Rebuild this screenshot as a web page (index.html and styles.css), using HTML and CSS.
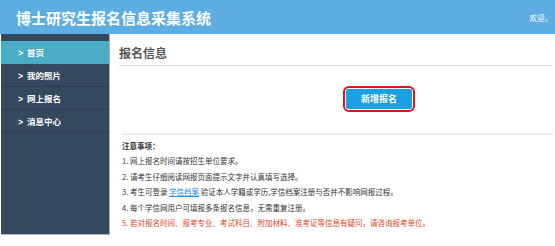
FILE: index.html
```html
<!DOCTYPE html>
<html>
<head>
	<meta charset="utf-8">
	<title>博士研究生报名信息采集系统</title>
	<link rel="stylesheet" href="styles.css">
</head>
<body>
	<div class="header">
		<h1 class="logo">博士研究生报名信息采集系统</h1>
		<span class="welcome">欢迎，</span>
	</div>

	<div class="main">
		<ul class="menu">
			<li class="active"><span class="arrow">&gt;</span>首页</li>
			<li><span class="arrow">&gt;</span>我的照片</li>
			<li><span class="arrow">&gt;</span>网上报名</li>
			<li><span class="arrow">&gt;</span>消息中心</li>
		</ul>

		<div class="content">
			<h2 class="title">报名信息</h2>

			<div class="btn-wrap">
				<span class="btn-ring"><a class="btn" href="#">新增报名</a></span>
			</div>

			<div class="notes">
				<p class="notes-head">注意事项：</p>
				<p>1. 网上报名时间请按招生单位要求。</p>
				<p>2. 请考生仔细阅读网报页面提示文字并认真填写选择。</p>
				<p>3. 考生可登录 <a class="link" href="#">学信档案</a> 验证本人学籍或学历,学信档案注册与否并不影响网报过程。</p>
				<p>4. 每个学信网用户可填报多条报名信息，无需重复注册。</p>
				<p class="warn">5. 若对报名时间、报考专业、考试科目、附加材料、准考证等信息有疑问，请咨询报考单位。</p>
			</div>
		</div>
	</div>
</body>
</html>
```

FILE: styles.css
```css
*{
	padding: 0;
	margin: 0;
}
body{
	font-family: "Liberation Sans", "Noto Sans CJK SC", sans-serif;
	background: #fff;
}
.header{
	height: 34px;
	background: #5dade2;
	display: flex;
	align-items: center;
	justify-content: space-between;
	padding: 0 3px 0 16px;
}
.logo{
	font-family: "Noto Sans CJK SC", sans-serif;
	font-size: 15px;
	font-weight: bold;
	color: #fff;
}
.welcome{
	font-size: 7.5px;
	color: #fff;
	font-family: "Noto Sans CJK SC", sans-serif;
}
.main{
	display: flex;
}
.menu{
	list-style: none;
	width: 108px;
	height: 193px;
	padding-top: 7px;
	margin-left: 1px;
	background: #34495e;
	border-right: 1px solid #a9b4bf;
	border-bottom: 1px solid #a9b4bf;
}
.menu li{
	height: 22px;
	line-height: 22px;
	border-bottom: 1px solid #2b3d4f;
	color: #fff;
	font-size: 8.5px;
	font-weight: bold;
	font-family: "Noto Sans CJK SC", sans-serif;
	padding-left: 17px;
}
.menu li.active{
	background: #4bacc6;
	border-bottom-color: #4bacc6;
}
.arrow{
	margin-right: 4px;
	font-family: "Liberation Sans", sans-serif;
}
.content{
	flex: 1;
	padding: 7px 2px 0 9px;
}
.title{
	height: 24px;
	line-height: 24px;
	font-size: 12px;
	font-weight: bold;
	color: #555;
	font-family: "Noto Sans CJK SC", sans-serif;
	border-bottom: 1px solid #dcdcdc;
}
.btn-wrap{
	padding: 20px 0 0 224px;
	height: 26px;
}
.btn-ring{
	display: inline-block;
	padding: 1px;
	border: 2px solid #e8101a;
	border-radius: 6px;
}
.btn{
	display: block;
	width: 66px;
	height: 20px;
	line-height: 20px;
	text-align: center;
	background: #1ba1e2;
	border-radius: 2px;
	color: #fff;
	font-size: 9px;
	font-weight: bold;
	text-decoration: none;
	font-family: "Noto Sans CJK SC", sans-serif;
}
.notes{
	margin: 21px 0 0 3px;
	border-top: 2px solid #ececec;
	padding-top: 3px;
	font-size: 7.5px;
	color: #333;
	font-family: "Noto Sans CJK SC", sans-serif;
}
.notes p{
	line-height: 15.4px;
	white-space: nowrap;
}
.notes-head{
	font-weight: bold;
}
.link{
	color: #1a8be8;
}
.warn{
	color: #e2461e;
}
```
